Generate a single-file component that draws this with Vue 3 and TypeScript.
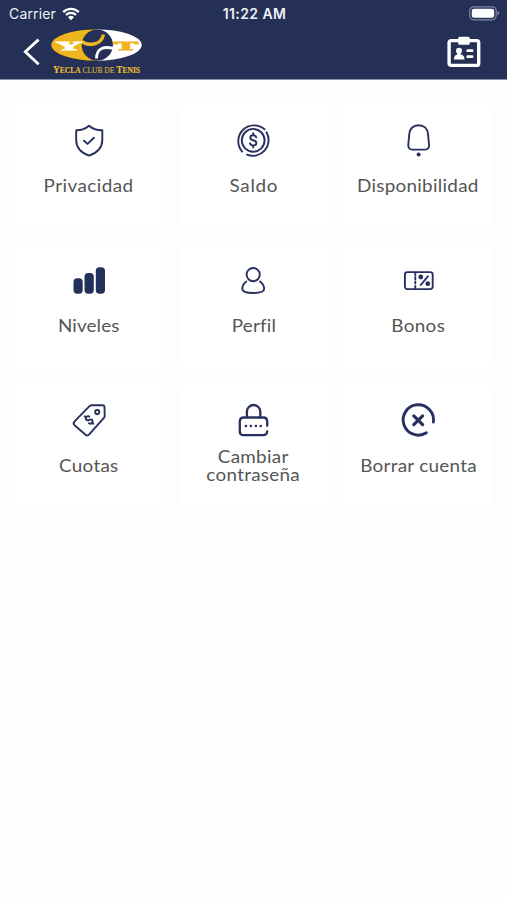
<script setup lang="ts">
interface Tile {
  icon: string
  lines: string[]
  spacing: number
}

const tiles: Tile[] = [
  { icon: 'shield', lines: ['Privacidad'], spacing: 0.4 },
  { icon: 'coin', lines: ['Saldo'], spacing: 0.6 },
  { icon: 'bell', lines: ['Disponibilidad'], spacing: 0.25 },
  { icon: 'bars', lines: ['Niveles'], spacing: 0.1 },
  { icon: 'person', lines: ['Perfil'], spacing: 0.15 },
  { icon: 'ticket', lines: ['Bonos'], spacing: 0.3 },
  { icon: 'tag', lines: ['Cuotas'], spacing: 0.25 },
  { icon: 'lock', lines: ['Cambiar', 'contraseña'], spacing: 0.25 },
  { icon: 'remove', lines: ['Borrar cuenta'], spacing: 0.25 },
]
</script>

<template>
  <div class="screen">
    <header class="header">
      <div class="status">
        <div class="carrier">
          <span>Carrier</span>
          <svg class="wifi" viewBox="0 0 18 14" width="18" height="14">
            <path d="M1.2 5.1a11 11 0 0 1 15.6 0" />
            <path d="M4 8a7 7 0 0 1 10 0" />
            <path class="solid" d="M9 13.2 6 10.2a4.3 4.3 0 0 1 6 0z" />
          </svg>
        </div>
        <div class="time">11:22 AM</div>
        <svg class="battery" viewBox="0 0 31 15" width="31" height="15">
          <rect class="shell" x="0.8" y="0.8" width="26.4" height="13" rx="4" />
          <rect class="charge" x="2.8" y="2.8" width="22.4" height="9" rx="2.2" />
          <path class="cap" d="M28.5 5v4.6q1.7-.6 1.7-2.3t-1.7-2.3z" />
        </svg>
      </div>
      <nav class="nav">
        <svg class="back" viewBox="0 0 18 28" width="18" height="28">
          <path d="M15.6 1.6 2.3 13.8 15.6 26.2" />
        </svg>
        <svg class="logo" viewBox="0 0 96 50" width="96" height="50">
          <defs>
            <clipPath id="oval"><ellipse cx="48.5" cy="18" rx="45.3" ry="15.6" /></clipPath>
          </defs>
          <g clip-path="url(#oval)">
            <rect x="0" y="0" width="49" height="36" fill="#efb51c" />
            <rect x="49" y="0" width="47" height="36" fill="#fff" />
            <circle cx="49.3" cy="18" r="15.6" fill="#243055" />
            <path d="M33.5 14.3C40 19 53 19 55.5 7.5" fill="none" stroke="#efb51c" stroke-width="3.4" />
            <path d="M48.5 31.5C48.5 20 57 19.5 65 21.3" fill="none" stroke="#fff" stroke-width="2.8" />
          </g>
          <text x="9" y="22.5" class="mono white" textLength="24" lengthAdjust="spacingAndGlyphs">Y</text>
          <text x="66" y="22.5" class="mono gold" textLength="24" lengthAdjust="spacingAndGlyphs">T</text>
          <text x="5" y="46" class="club" textLength="87" lengthAdjust="spacingAndGlyphs"><tspan class="big b">Y</tspan><tspan class="b">ECLA</tspan> <tspan>CLUB DE</tspan> <tspan class="big b">T</tspan><tspan class="b">ENIS</tspan></text>
        </svg>
        <svg class="badge" viewBox="0 0 34 32" width="34" height="32">
          <rect class="frame" x="2.1" y="4.6" width="29.6" height="24.8" rx="2" />
          <rect x="11.2" y="0.8" width="11.5" height="8" rx="1.5" />
          <circle cx="12" cy="14.7" r="3" />
          <path d="M10.3 15.5h3.4v3q3.8.7 3.800 4.900H6.900q0-4.200 3.400-4.900z" />
          <rect x="19.4" y="13.2" width="7" height="2.9" rx="1.2" />
          <rect x="19.4" y="19.2" width="7" height="2.9" rx="1.2" />
        </svg>
      </nav>
    </header>

    <main class="grid">
      <div v-for="tile in tiles" :key="tile.icon" class="cell">
        <div class="card">
          <svg class="icon" viewBox="0 0 40 40" width="40" height="40">
            <g v-if="tile.icon === 'shield'">
              <path d="M20 5.7C16.3 9 12 10.3 7.2 10.2V20c0 8 5 12.8 12.8 15.6C28 32.8 33.3 28 33.3 20v-9.8C28.5 10.3 23.7 9 20 5.7z" />
              <path d="m15 20.7 3.5 3.2 6.5-6.1" />
            </g>
            <g v-else-if="tile.icon === 'coin'">
              <circle cx="20.2" cy="20.3" r="11.4" />
              <path d="M9.2 31.6A15.8 15.8 0 0 1 31.5 9.3" />
              <path d="M33.5 12.3A15.7 15.7 0 0 1 14 34.7" />
              <path d="M23.3 17.4q-.6-2.1-3.1-2.1-2.900 0-2.900 2.300t2.900 2.700q3.100.5 3.100 2.700 0 2.500-3.100 2.500-2.600 0-3.200-2.200M20.200 13.200v2M20.200 25.400v2" />
            </g>
            <g v-else-if="tile.icon === 'bell'">
              <path d="M20.6 5.2c-5.600 0-9 3.800-9.300 8.600l-1 10.700c-.3 3.200 1.200 5.100 4 5.100h12.800c2.800 0 4.200-1.900 3.900-5.100l-1-10.700c-.4-4.800-3.800-8.600-9.400-8.600z" />
              <circle class="solid" cx="20.6" cy="34.5" r="2" />
            </g>
            <g v-else-if="tile.icon === 'bars'" class="solid">
              <rect x="4.5" y="18.3" width="9.2" height="15.5" rx="3.7" />
              <rect x="15.5" y="13" width="9.3" height="20.8" rx="3.7" />
              <rect x="26.8" y="7.3" width="9.2" height="26.5" rx="3.7" />
            </g>
            <g v-else-if="tile.icon === 'person'">
              <circle cx="20.2" cy="14.6" r="6.6" />
              <path d="M13.3 21.4C10.3 23.6 9.3 26.6 9.3 29c0 3 4.5 4 10.9 4s10.9-1 10.9-4c0-2.400-1-5.400-4-7.600" />
            </g>
            <g v-else-if="tile.icon === 'ticket'">
              <rect x="6.9" y="12.1" width="27.8" height="17" rx="2.5" />
              <path d="M17.3 12.5v2.800M17.300 17.200v2M17.300 21.500v2M17.300 26v2.800M29.900 16.300l-7.200 8.700" />
              <circle class="solid" cx="22.8" cy="17" r="2.4" />
              <circle class="solid" cx="29.8" cy="23.7" r="2.4" />
            </g>
            <g v-else-if="tile.icon === 'tag'">
              <path d="M22.7 5.3h11q1.700 0 1.800 1.600l.2 9q0 1.200-.8 2L20.200 34.400q-1.900 2-3.900.1L5.500 25.200q-1.800-1.900.1-3.800L20.500 6.200q.9-.9 2.200-.9z" />
              <circle cx="28.2" cy="12.1" r="2.1" />
              <path d="M20.3 16.5q-2.400-.8-3.300.8-.8 1.700 1 2.800 1 .5 2.300-.2 1.800-1.100 2.900.1 1 1.500-.3 3-1.200 1.300-3 .2M16.900 17.300l-1.300-1M23.100 22.700l1.200 1" />
            </g>
            <g v-else-if="tile.icon === 'lock'" class="heavy">
              <path d="M34.2 25.8v-4.300q0-4-4-4H10.800q-4 0-4 4v9.700q0 4 4 4h19.400q3.600 0 4-3.800" />
              <path d="M13.9 17.2V11.7a6.700 6.700 0 0 1 13.400 0v5.500" />
              <g class="dots">
                <circle cx="12.9" cy="26" r="1.3" />
                <circle cx="17.9" cy="26" r="1.3" />
                <circle cx="22.9" cy="26" r="1.3" />
                <circle cx="27.7" cy="26" r="1.3" />
              </g>
            </g>
            <g v-else class="bold">
              <path d="M28.4 32.8A15.200 15.200 0 1 1 35.400 22" />
              <path class="cross" d="m15.800 15.900 8.800 8.800M24.600 15.900l-8.800 8.800" />
            </g>
          </svg>
          <div class="label" :style="{ letterSpacing: tile.spacing + 'px' }">
            <span v-for="line in tile.lines" :key="line">{{ line }}</span>
          </div>
        </div>
      </div>
    </main>
  </div>
</template>

<style>
body {
  background: #fefefe;
}
</style>

<style scoped>
.screen {
  width: 507px;
  height: 900px;
  overflow: hidden;
  background: #fefefe;
}
.header {
  box-sizing: border-box;
  height: 80px;
  background: #243055;
  border-bottom: 1px solid #8390a6;
  color: #eef1f8;
}
.status {
  display: grid;
  grid-template-columns: 1fr auto 1fr;
  align-items: center;
  height: 27px;
  padding: 0 7px 0 9px;
  font-family: Inter, sans-serif;
  font-size: 14px;
}
.carrier {
  display: flex;
  align-items: center;
  gap: 6px;
  letter-spacing: 0.15px;
}
.wifi {
  fill: none;
  stroke: #fff;
  stroke-width: 2.3;
}
.wifi .solid {
  fill: #fff;
  stroke: none;
}
.time {
  font-weight: 600;
  letter-spacing: 0.4px;
}
.battery {
  justify-self: end;
}
.shell {
  fill: none;
  stroke: #8088a2;
  stroke-width: 1.2;
}
.charge {
  fill: #fff;
}
.cap {
  fill: #8088a2;
}
.nav {
  display: flex;
  align-items: center;
  height: 50px;
  padding: 0 26px 0 23px;
}
.back {
  fill: none;
  stroke: #fff;
  stroke-width: 2.8;
}
.logo {
  margin-left: 7px;
}
.mono {
  font: bold 11.5px "DejaVu Serif", serif;
  stroke-width: 0.8;
}
.white {
  fill: #fff;
  stroke: #fff;
}
.gold {
  fill: #efb51c;
  stroke: #efb51c;
}
.club {
  font: 7.6px "Liberation Serif", serif;
  fill: #d9ab34;
  stroke: #d9ab34;
  stroke-width: 0.15;
}
.big {
  font-size: 9.6px;
}
.b {
  font-weight: 700;
  fill: #f0bd2c;
  stroke: #f0bd2c;
}
.badge {
  margin-left: auto;
  fill: #fff;
}
.frame {
  fill: none;
  stroke: #fff;
  stroke-width: 3.4;
}
.grid {
  display: grid;
  grid-template-columns: repeat(3, 1fr);
  grid-auto-rows: 140px;
  padding: 16px 6.5px 0;
}
.cell {
  padding: 5px 8px;
}
.card {
  box-sizing: border-box;
  height: 130px;
  padding-top: 19px;
  display: flex;
  flex-direction: column;
  align-items: center;
  border-radius: 8px;
  background: #fff;
  box-shadow: 0 0 8px rgba(0, 0, 0, 0.016);
}
.icon {
  flex: none;
  fill: none;
  stroke: #27305f;
  stroke-width: 1.9;
  stroke-linecap: round;
  stroke-linejoin: round;
}
.icon .solid {
  fill: #233059;
  stroke: none;
}
.icon .heavy {
  stroke-width: 2.3;
}
.icon .bold {
  stroke-width: 2.9;
}
.icon .cross {
  stroke-width: 3.2;
}
.icon .dots {
  fill: #27305f;
  stroke: none;
}
.label {
  display: flex;
  flex-direction: column;
  align-items: center;
  justify-content: center;
  height: 35px;
  margin-top: 8px;
  font-family: Lato, "Open Sans", sans-serif;
  font-size: 17px;
  line-height: 17.5px;
  color: #555;
  white-space: nowrap;
  transform: scaleX(1.11);
}
</style>
